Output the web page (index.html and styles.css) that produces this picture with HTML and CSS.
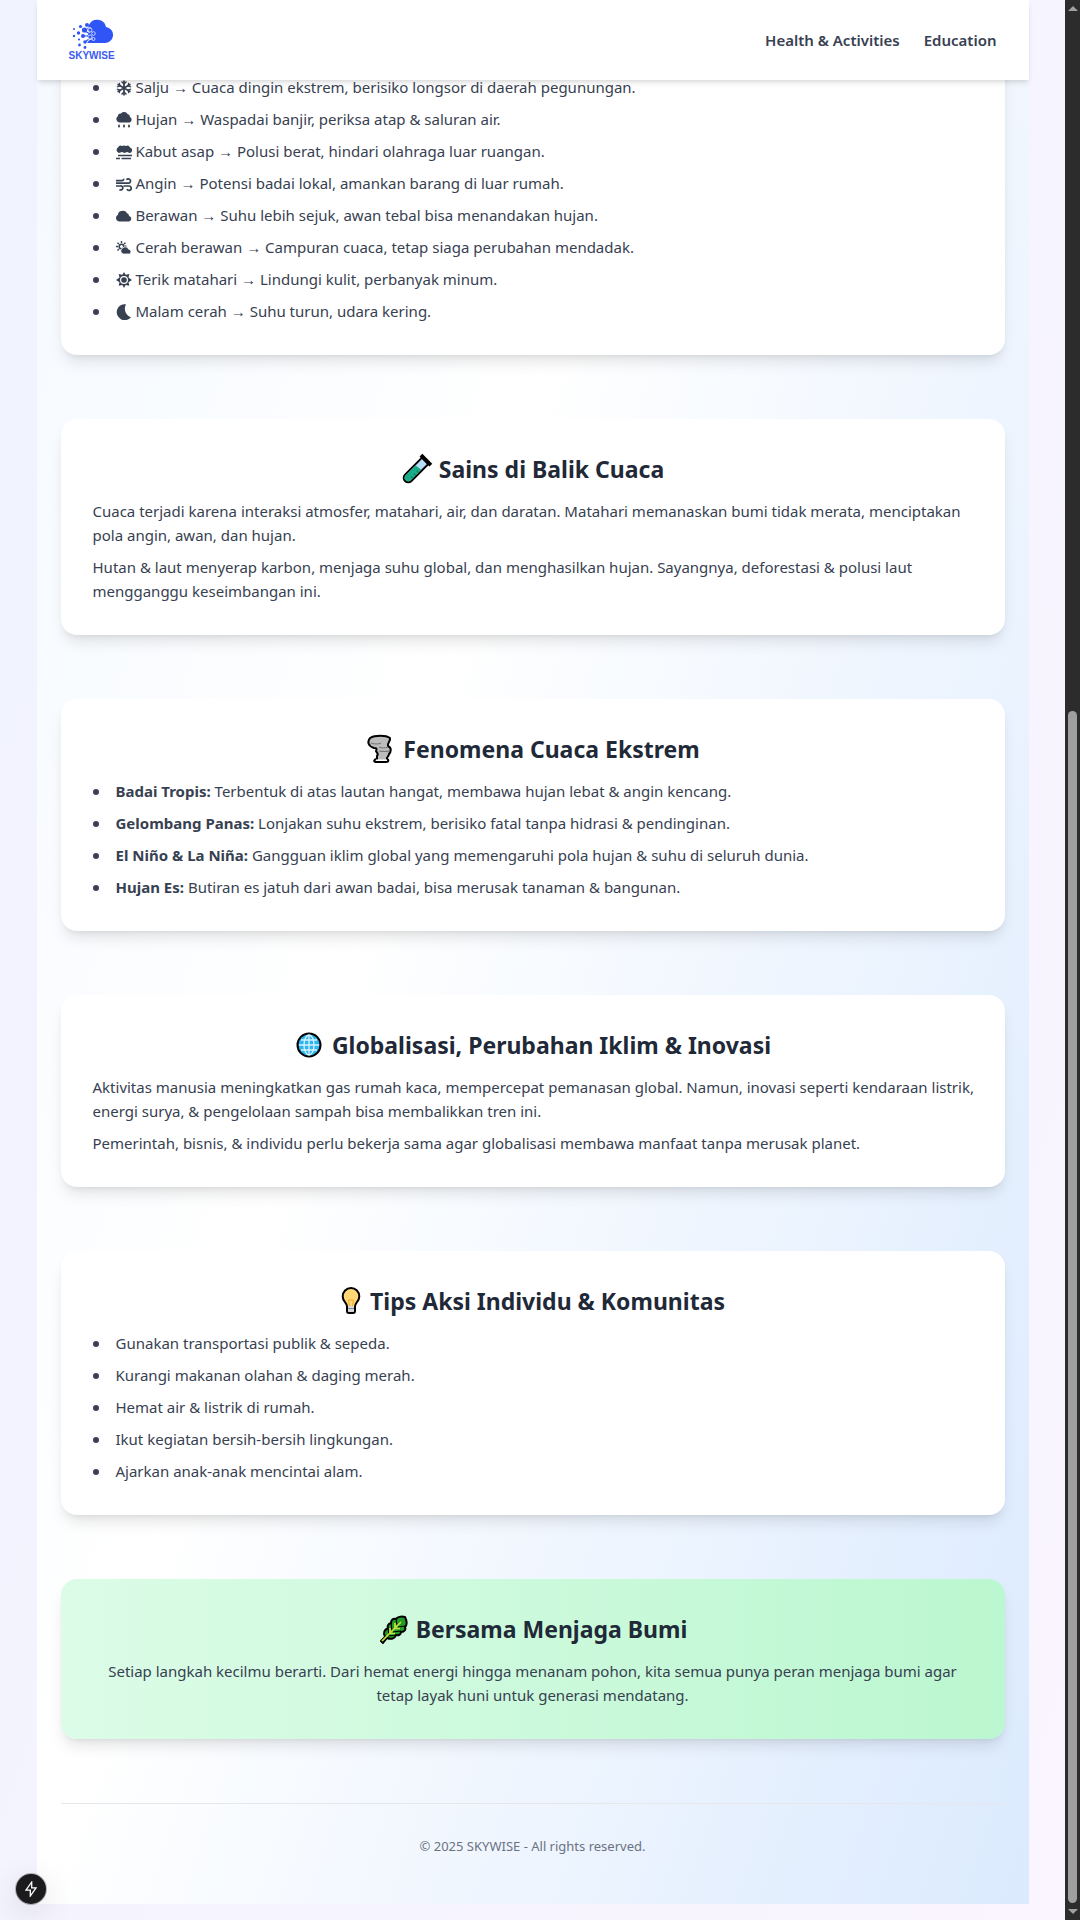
FILE: index.html
```html
<!DOCTYPE html>
<html lang="id">
<head>
<meta charset="utf-8">
<meta name="viewport" content="width=device-width, initial-scale=1">
<title>SKYWISE - Education</title>
<link rel="stylesheet" href="styles.css">
</head>
<body>
<div class="page">
  <header class="navbar">
    <a class="logo" href="#" aria-label="SKYWISE">
      <svg class="logo-mark" viewBox="0 0 42 32" width="42" height="32" aria-hidden="true">
        <g fill="#2f55f7">
          <path d="M16 25h17a8 8 0 0 0 2-16A9 9 0 0 0 18 7l-2 4 3 3-3 4 3 3z"/>
          <circle cx="16" cy="7" r="2"/><circle cx="13.500" cy="12" r="2.600"/><circle cx="9.500" cy="8.500" r="1.600"/>
          <circle cx="7.500" cy="15" r="1.700"/><circle cx="12" cy="18" r="2"/><circle cx="3" cy="11" r="1"/>
          <circle cx="3" cy="18" r="1.200"/><circle cx="8" cy="21.500" r="1.100"/><circle cx="14" cy="24" r="1.800"/>
          <circle cx="8.500" cy="27" r="1.400"/><circle cx="14" cy="29.500" r="1.400"/>
        </g>
        <g fill="none" stroke="#2f55f7" stroke-width="1.200"><path d="M13 18h6M14 13l5 3M14 24l4-3"/></g>
        <g fill="#2f55f7" stroke="#fff" stroke-width=".7"><circle cx="19" cy="12" r="2"/><circle cx="22.500" cy="15.500" r="1.800"/><circle cx="19" cy="19" r="2"/><circle cx="22.500" cy="21" r="1.500"/><path d="M16 9l4 1M17 22l4-1"/></g>
      </svg>
      <span class="logo-text">SKYWISE</span>
    </a>
    <nav class="nav-links">
      <a href="#">Health &amp; Activities</a>
      <a href="#">Education</a>
    </nav>
  </header>

  <main class="content">
    <section class="card card-first">
      <ul class="list">
        <li><svg class="icon" viewBox="0 0 16 16" aria-hidden="true"><g fill="none" stroke="currentColor" stroke-width="1.700"><path d="M8 0.500v15M1.500 4.200l13 7.600M1.500 11.800l13-7.600"/><path stroke-width="1.300" d="M5.500 1.500L8 4l2.500-2.500M5.500 14.500L8 12l2.500 2.500M.8 7l3.200-1L3.200 2.800M15.200 9l-3.200 1 .8 3.200M.8 9l3.200 1-.8 3.200M15.200 7l-3.200-1 .8-3.200"/></g></svg> Salju → Cuaca dingin ekstrem, berisiko longsor di daerah pegunungan.</li>
        <li><svg class="icon" viewBox="0 0 16 16" aria-hidden="true"><path fill="currentColor" d="M3.500 10.500a3.500 3.500 0 0 1-1.700-6.300A3 3 0 0 1 5 1.500 4 4 0 0 1 11.500 2 3 3 0 0 1 14 5a3 3 0 0 1-.5 5.500zM3 12q2 3 0 3.500-2-.5 0-3.500m5 0q2 3 0 3.500-2-.5 0-3.500m5 0q2 3 0 3.500-2-.5 0-3.500"/></svg> Hujan → Waspadai banjir, periksa atap &amp; saluran air.</li>
        <li><svg class="icon" viewBox="0 0 16 16" aria-hidden="true"><path fill="currentColor" d="M3 9a3 3 0 0 1-1-5.500A3 3 0 0 1 6 2a4 4 0 0 1 4 0 3 3 0 0 1 4 1.500A2.800 2.800 0 0 1 13.500 9L11 8 8.500 9 6 8z"/><path stroke="currentColor" stroke-width="1.300" d="M2 11.500h14M0 14.500h4M5.500 14.500H15"/></svg> Kabut asap → Polusi berat, hindari olahraga luar ruangan.</li>
        <li><svg class="icon" viewBox="0 0 16 16" aria-hidden="true"><g fill="none" stroke="currentColor" stroke-width="1.700"><path d="M0 7.200h12.500a2.200 2.200 0 1 0-2-3.500M7.500 10h5.500a2.200 2.200 0 1 1-2 3M0 4.700h6a1.500 1.500 0 0 0 1.500-2M0 10h4.500a2 2 0 1 1-1 3.500"/></g></svg> Angin → Potensi badai lokal, amankan barang di luar rumah.</li>
        <li><svg class="icon" viewBox="0 0 16 16" aria-hidden="true"><path fill="currentColor" d="M3.600 13.500A3.600 3.600 0 0 1 2 6.700 4 4 0 0 1 5.600 3a5 5 0 0 1 5.500 2.300 3 3 0 0 1 2 2.700 2.800 2.800 0 0 1-.1 5.500z"/></svg> Berawan → Suhu lebih sejuk, awan tebal bisa menandakan hujan.</li>
        <li><svg class="icon" viewBox="0 0 16 16" aria-hidden="true"><g stroke="currentColor" fill="none"><circle cx="5.500" cy="6.500" r="2.300" stroke-width="1.600"/><path stroke-width="1.400" d="M5.500 1v2M0 6.500h2M1.500 2.700l1.400 1.400M9.500 2.700L8 4.100M1.500 10.500l1.400-1.400M10.500 6l-1.500.4"/></g><path fill="currentColor" stroke="#fff" stroke-width=".8" d="M7.300 14A3.200 3.200 0 0 1 7 7.800a3.400 3.400 0 0 1 5.600 1.400A2.500 2.500 0 0 1 13.500 14z"/></svg> Cerah berawan → Campuran cuaca, tetap siaga perubahan mendadak.</li>
        <li><svg class="icon" viewBox="0 0 16 16" aria-hidden="true"><path fill="currentColor" fill-rule="evenodd" d="M8 0l1.600 2.800 3.800-.7-.9 3.500L16 8l-3.500 2.200.9 3.600-3.800-.8L8 16l-1.600-3-3.800.8.9-3.600L0 8l3.500-2.400-.9-3.500 3.800.7zM8 4a4 4 0 1 0 0 8 4 4 0 1 0 0-8"/><circle cx="8" cy="8" r="2.800" fill="currentColor"/></svg> Terik matahari → Lindungi kulit, perbanyak minum.</li>
        <li><svg class="icon" viewBox="0 0 16 16" aria-hidden="true"><path fill="currentColor" d="M10 .3A9 9 0 0 0 15 13.200 8 8 0 1 1 10 .3z"/></svg> Malam cerah → Suhu turun, udara kering.</li>
      </ul>
    </section>

    <section class="card">
      <h2><svg class="emoji" viewBox="0 0 32 32" aria-hidden="true"><g transform="translate(-1 1) rotate(45 16 16)" stroke="#000" stroke-width="2"><path fill="#b7dcf5" d="M11.500 3v24a4.500 4.500 0 0 0 9 0V3z"/><path fill="#18ac87" stroke="none" d="M12.500 13l7-1v15a3.500 3.500 0 0 1-7 0z"/><path stroke="#0c7a60" stroke-width="1" d="M17 16h3M17 20h3M17 24h3"/><path fill="#b7dcf5" d="M10 1h12v2H10z"/></g></svg><span>Sains di Balik Cuaca</span></h2>
      <p>Cuaca terjadi karena interaksi atmosfer, matahari, air, dan daratan. Matahari memanaskan bumi tidak merata, menciptakan pola angin, awan, dan hujan.</p>
      <p>Hutan &amp; laut menyerap karbon, menjaga suhu global, dan menghasilkan hujan. Sayangnya, deforestasi &amp; polusi laut mengganggu keseimbangan ini.</p>
    </section>

    <section class="card">
      <h2><svg class="emoji" viewBox="0 0 32 32" aria-hidden="true"><path fill="#bcbcbc" stroke="#000" stroke-width="2" stroke-linejoin="round" d="M5 5c5-3 16-3 20 0 1 3-3 5-2 8 4 2 3 6 1 8 0 3-3 3-2 5 2 1 2 3-1 3H11c-3 0-2-3 1-3v-3c2-2 0-3-1-5 1-2 1-3-2-3C3 13 2 9 5 5z"/><path fill="none" stroke="#777" stroke-width="1.200" d="M6 10q6 2 10 0M14 14q4 2 9 0M14 18q6 1 10 0"/><path fill="#fff" d="M11 26.500h11v1.500H11z"/></svg><span>Fenomena Cuaca Ekstrem</span></h2>
      <ul class="list">
        <li><strong>Badai Tropis:</strong> Terbentuk di atas lautan hangat, membawa hujan lebat &amp; angin kencang.</li>
        <li><strong>Gelombang Panas:</strong> Lonjakan suhu ekstrem, berisiko fatal tanpa hidrasi &amp; pendinginan.</li>
        <li><strong>El Niño &amp; La Niña:</strong> Gangguan iklim global yang memengaruhi pola hujan &amp; suhu di seluruh dunia.</li>
        <li><strong>Hujan Es:</strong> Butiran es jatuh dari awan badai, bisa merusak tanaman &amp; bangunan.</li>
      </ul>
    </section>

    <section class="card">
      <h2><svg class="emoji" viewBox="0 0 32 32" aria-hidden="true"><circle cx="15" cy="16" r="11.500" fill="#2eb4f0" stroke="#000" stroke-width="2"/><g fill="none" stroke="#d8f3ff" stroke-width="1.300"><ellipse cx="15" cy="16" rx="5" ry="10"/><path d="M15 6v20M5 16h20M7 11h16M7 21h16"/></g></svg><span>Globalisasi, Perubahan Iklim &amp; Inovasi</span></h2>
      <p>Aktivitas manusia meningkatkan gas rumah kaca, mempercepat pemanasan global. Namun, inovasi seperti kendaraan listrik, energi surya, &amp; pengelolaan sampah bisa membalikkan tren ini.</p>
      <p>Pemerintah, bisnis, &amp; individu perlu bekerja sama agar globalisasi membawa manfaat tanpa merusak planet.</p>
    </section>

    <section class="card">
      <h2><svg class="emoji emoji-narrow" viewBox="0 0 24 32" aria-hidden="true"><path fill="#ffd777" stroke="#000" stroke-width="2" d="M11 3a8.300 8.300 0 0 0-8.300 8.500c0 5 4.300 6 4.300 10V26q0 2 2 2h4q2 0 2-2v-4.500c0-4 4.300-5 4.300-10A8.300 8.300 0 0 0 11 3z"/><path fill="#d5d5dc" d="M8 21h6v5q0 1-1 1H9q-1 0-1-1z"/><path fill="none" stroke="#efaa28" d="M9.500 21l-1-6h5l-1 6"/><path stroke="#888" d="M8 23.500h6"/></svg><span>Tips Aksi Individu &amp; Komunitas</span></h2>
      <ul class="list">
        <li>Gunakan transportasi publik &amp; sepeda.</li>
        <li>Kurangi makanan olahan &amp; daging merah.</li>
        <li>Hemat air &amp; listrik di rumah.</li>
        <li>Ikut kegiatan bersih-bersih lingkungan.</li>
        <li>Ajarkan anak-anak mencintai alam.</li>
      </ul>
    </section>

    <section class="card card-green">
      <h2><svg class="emoji" viewBox="0 0 32 32" aria-hidden="true"><path fill="#229c27" stroke="#000" stroke-width="2" stroke-linejoin="round" d="M27 4c-4-1-8 0-9 2-3-1-5 1-5 4-3 1-4 3-3 5-4 2-5 5-3 9l-4 4 2 2 4-5c5 2 8 0 9-3 3 1 5-1 5-3 4 0 5-3 4-5 2-2 2-6 0-10z"/><path fill="none" stroke="#000" stroke-width="1.200" d="M18 6l1 6M13 10l1 8M10 15l1 7M27 13l-7 1M23 18l-8 1M18 22l-8 1"/><path fill="none" stroke="#c9e13c" stroke-width="1.700" d="M4 28L23 9M12 20v-5M11 20.500h6M17 15v-5M16 15.500h6"/></svg><span>Bersama Menjaga Bumi</span></h2>
      <p>Setiap langkah kecilmu berarti. Dari hemat energi hingga menanam pohon, kita semua punya peran menjaga bumi agar tetap layak huni untuk generasi mendatang.</p>
    </section>

    <footer class="footer">© 2025 SKYWISE - All rights reserved.</footer>
  </main>
</div>

<div class="scrollbar" aria-hidden="true">
  <span class="arrow arrow-up"></span>
  <span class="thumb"></span>
  <span class="arrow arrow-down"></span>
</div>

<button class="dev-button" type="button" aria-label="Open dev tools">
  <svg viewBox="0 0 16 16" width="16" height="16" aria-hidden="true"><path fill="none" stroke="#fff" stroke-width="1.300" d="M8.700 1L3 9.200h4.300V15L13 6.800H8.700z"/></svg>
</button>
</body>
</html>
```
FILE: styles.css
```css
* {
  box-sizing: border-box;
}

body {
  margin: 0;
  min-height: 100vh;
  display: flex;
  font-family: "Noto Sans", "Open Sans", sans-serif;
  font-size: 15px;
  line-height: 24px;
  color: #374151;
  background: linear-gradient(to bottom right, #eef2ff, #faf5ff) bottom / 100% 3045px no-repeat;
}

h2,
p,
ul {
  margin: 0;
  padding: 0;
}

.page {
  flex: 1;
  min-width: 0;
  padding-bottom: 16px;
}

.navbar,
.content {
  width: calc(100% - 32px);
  max-width: 992px;
  margin: 0 auto;
}

.navbar {
  position: sticky;
  top: 0;
  z-index: 10;
  height: 80px;
  margin-bottom: -80px;
  padding: 0 32px;
  display: flex;
  align-items: center;
  justify-content: space-between;
  background: #fff;
  box-shadow: 0 4px 6px -1px rgba(0, 0, 0, 0.1), 0 2px 4px -2px rgba(0, 0, 0, 0.1);
}

.logo {
  display: flex;
  flex-direction: column;
  align-items: center;
  text-decoration: none;
}

.logo-mark {
  display: block;
}

.logo-text {
  font: bold 10px/12px "Liberation Sans", Arial, sans-serif;
  color: #3b5bf5;
}

.nav-links {
  display: flex;
  gap: 24px;
}

.nav-links a {
  font-weight: 600;
  color: #374151;
  text-decoration: none;
}

.content {
  padding: 0 24px 48px;
  display: flex;
  flex-direction: column;
  gap: 64px;
  background: linear-gradient(to bottom right, #eff6ff, #fff, #dbeafe) bottom / 100% 3000px no-repeat;
}

.card {
  padding: 32px 24px 32px 32px;
  border-radius: 16px;
  background: #fff;
  box-shadow: 0 10px 15px -3px rgba(0, 0, 0, 0.1), 0 4px 6px -4px rgba(0, 0, 0, 0.1);
}

.card-first {
  padding-top: 75px;
  border-radius: 0 0 16px 16px;
}

.card-green {
  padding-right: 32px;
  text-align: center;
  background: linear-gradient(to right, #dcfce7, #bbf7d0);
}

.card h2 {
  display: flex;
  justify-content: center;
  align-items: center;
  gap: 6px;
  padding-top: 2px;
  margin-bottom: 14px;
  font-size: 23px;
  line-height: 32px;
  font-weight: 700;
  color: #1f2937;
}

.card:not(.card-green) h2 {
  padding-right: 8px;
}

.card p + p,
.list li + li {
  margin-top: 8px;
}

.list {
  list-style: none;
}

.list li::before {
  content: "";
  display: inline-block;
  width: 6px;
  height: 6px;
  margin-right: 17px;
  border-radius: 50%;
  vertical-align: 2px;
  background: currentColor;
}

.icon {
  width: 16px;
  height: 16px;
  vertical-align: -3px;
}

.emoji {
  flex: none;
  width: 32px;
  height: 32px;
}

.emoji-narrow {
  width: 24px;
}

.footer {
  padding-top: 32px;
  border-top: 1px solid #e5e7eb;
  text-align: center;
  font-size: 13px;
  line-height: 20px;
  color: #6b7280;
}

.scrollbar {
  position: sticky;
  top: 0;
  flex: none;
  width: 15px;
  height: 100vh;
  padding: 6px 3px;
  display: flex;
  flex-direction: column;
  align-items: center;
  background: #2c2c2c;
}

.arrow {
  border: 5px solid transparent;
}

.arrow-up {
  border-top: 0;
  border-bottom-color: #9f9f9f;
}

.arrow-down {
  border-bottom: 0;
  border-top-color: #9f9f9f;
}

.thumb {
  width: 9px;
  height: 1192px;
  max-height: 90%;
  margin-top: auto;
  margin-bottom: 6px;
  border-radius: 5px;
  background: #9f9f9f;
}

.dev-button {
  position: fixed;
  left: 16px;
  bottom: 16px;
  width: 30px;
  height: 30px;
  padding: 0;
  display: flex;
  align-items: center;
  justify-content: center;
  border: 0;
  border-radius: 50%;
  background: #1b1b1d;
  box-shadow: 0 0 0 1px rgba(23, 23, 23, 0.3), 0 8px 32px rgba(0, 0, 0, 0.14);
}
```
